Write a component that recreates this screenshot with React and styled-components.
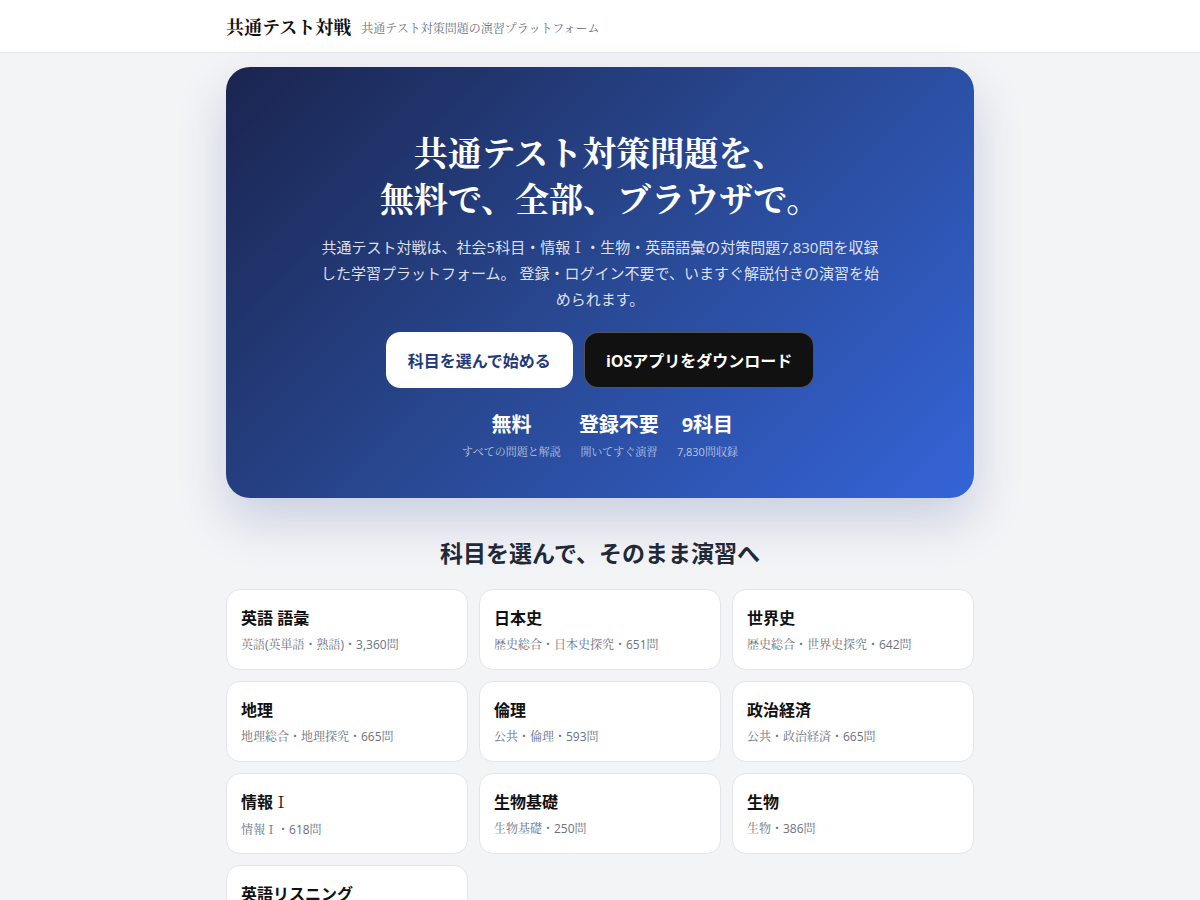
import React from "react";
import styled, { createGlobalStyle } from "styled-components";

const SANS = `"Open Sans", "Noto Sans CJK JP", sans-serif`;
const SMALL = `"Open Sans", "Noto Serif CJK JP", serif`;
const SERIF = `"Noto Serif CJK JP", serif`;

const Global = createGlobalStyle`
  * { box-sizing: border-box; }
  html, body { margin: 0; padding: 0; }
  body {
    background: #f3f4f6;
    font-family: ${SANS};
    color: #111827;
  }
`;

const Header = styled.header`
  background: #fff;
  border-bottom: 1px solid #e5e7eb;
  height: 53px;
`;

const HeaderInner = styled.div`
  width: 748px;
  margin: 0 auto;
  height: 100%;
  display: flex;
  align-items: center;
  gap: 10px;
`;

const Brand = styled.div`
  font-family: ${SERIF};
  font-weight: 700;
  font-size: 18px;
  color: #111;
`;

const Tagline = styled.div`
  font-family: ${SERIF};
  font-size: 12px;
  color: #6b7280;
  padding-top: 3px;
`;

const Main = styled.main`
  width: 748px;
  margin: 0 auto;
  padding: 14px 0 40px;
`;

const Hero = styled.section`
  border-radius: 24px;
  background: linear-gradient(135deg, #1a244f 0%, #28478f 48%, #3464d8 100%);
  box-shadow: 0 22px 50px rgba(35, 60, 140, 0.2);
  padding: 62px 40px 37px;
  display: flex;
  flex-direction: column;
  align-items: center;
  color: #fff;
  text-align: center;
`;

const HeroTitle = styled.h1`
  margin: 0;
  font-family: ${SERIF};
  font-weight: 700;
  font-size: 34px;
  line-height: 46px;
`;

const Lead = styled.p`
  margin: 13px 0 0;
  width: 562px;
  font-size: 15px;
  line-height: 26px;
  color: rgba(255, 255, 255, 0.85);
`;

const Roman = styled.span`
  font-family: ${SERIF};
  font-weight: 400;
`;

const Buttons = styled.div`
  display: flex;
  gap: 11px;
  margin-top: 20px;
`;

const Button = styled.a`
  display: flex;
  align-items: center;
  justify-content: center;
  height: 56px;
  padding: 0 21px;
  border-radius: 14px;
  font-size: 16px;
  font-weight: 700;
  text-decoration: none;
  background: ${(p) => (p.$dark ? "#111" : "#fff")};
  color: ${(p) => (p.$dark ? "#fff" : "#1f3a7c")};
  border: 1px solid ${(p) => (p.$dark ? "rgba(255,255,255,0.28)" : "#fff")};
`;

const Stats = styled.div`
  display: flex;
  gap: 18px;
  margin-top: 22px;
`;

const Stat = styled.div`
  display: flex;
  flex-direction: column;
  align-items: center;
`;

const StatValue = styled.div`
  font-size: 20px;
  font-weight: 700;
  line-height: 30px;
`;

const StatLabel = styled.div`
  font-family: ${SMALL};
  font-size: 11px;
  line-height: 18px;
  color: rgba(255, 255, 255, 0.68);
  margin-top: 3px;
`;

const SectionTitle = styled.h2`
  margin: 39px 0 20px;
  text-align: center;
  font-size: 23px;
  font-weight: 700;
  line-height: 32px;
  color: #1f2937;
`;

const Grid = styled.div`
  display: grid;
  grid-template-columns: repeat(3, 1fr);
  gap: 11px;
`;

const Card = styled.a`
  background: #fff;
  border: 1px solid #e3e5e9;
  border-radius: 14px;
  height: 81px;
  padding: 16px 14px 0;
  text-decoration: none;
  color: inherit;
  display: flex;
  flex-direction: column;
`;

const CardTitle = styled.div`
  font-size: 16px;
  font-weight: 700;
  line-height: 24px;
  color: #111;
`;

const CardDesc = styled.div`
  margin-top: 6px;
  font-family: ${SMALL};
  font-size: 12px;
  line-height: 18px;
  color: #6b7280;
`;

const I = () => <Roman>Ⅰ</Roman>;

const subjects = [
  ["eng", "英語 語彙", "英語(英単語・熟語)・3,360問"],
  ["jhist", "日本史", "歴史総合・日本史探究・651問"],
  ["whist", "世界史", "歴史総合・世界史探究・642問"],
  ["geo", "地理", "地理総合・地理探究・665問"],
  ["eth", "倫理", "公共・倫理・593問"],
  ["pol", "政治経済", "公共・政治経済・665問"],
  ["joho", <>情報<I /></>, <>情報<I />・618問</>],
  ["biob", "生物基礎", "生物基礎・250問"],
  ["bio", "生物", "生物・386問"],
  ["listen", "英語リスニング", "英語リスニング・共通テスト形式"],
];

const stats = [
  ["無料", "すべての問題と解説"],
  ["登録不要", "開いてすぐ演習"],
  ["9科目", "7,830問収録"],
];

export default function App() {
  return (
    <div lang="ja">
      <Global />
      <Header>
        <HeaderInner>
          <Brand>共通テスト対戦</Brand>
          <Tagline>共通テスト対策問題の演習プラットフォーム</Tagline>
        </HeaderInner>
      </Header>
      <Main>
        <Hero>
          <HeroTitle>
            共通テスト対策問題を、
            <br />
            無料で、全部、ブラウザで。
          </HeroTitle>
          <Lead>
            共通テスト対戦は、社会5科目・情報<I />・生物・英語語彙の対策問題7,830問を収録した学習プラットフォーム。
            登録・ログイン不要で、いますぐ解説付きの演習を始められます。
          </Lead>
          <Buttons>
            <Button href="#">科目を選んで始める</Button>
            <Button href="#" $dark>
              iOSアプリをダウンロード
            </Button>
          </Buttons>
          <Stats>
            {stats.map(([v, l]) => (
              <Stat key={v}>
                <StatValue>{v}</StatValue>
                <StatLabel>{l}</StatLabel>
              </Stat>
            ))}
          </Stats>
        </Hero>
        <SectionTitle>科目を選んで、そのまま演習へ</SectionTitle>
        <Grid>
          {subjects.map(([k, t, d]) => (
            <Card href="#" key={k}>
              <CardTitle>{t}</CardTitle>
              <CardDesc>{d}</CardDesc>
            </Card>
          ))}
        </Grid>
      </Main>
    </div>
  );
}
